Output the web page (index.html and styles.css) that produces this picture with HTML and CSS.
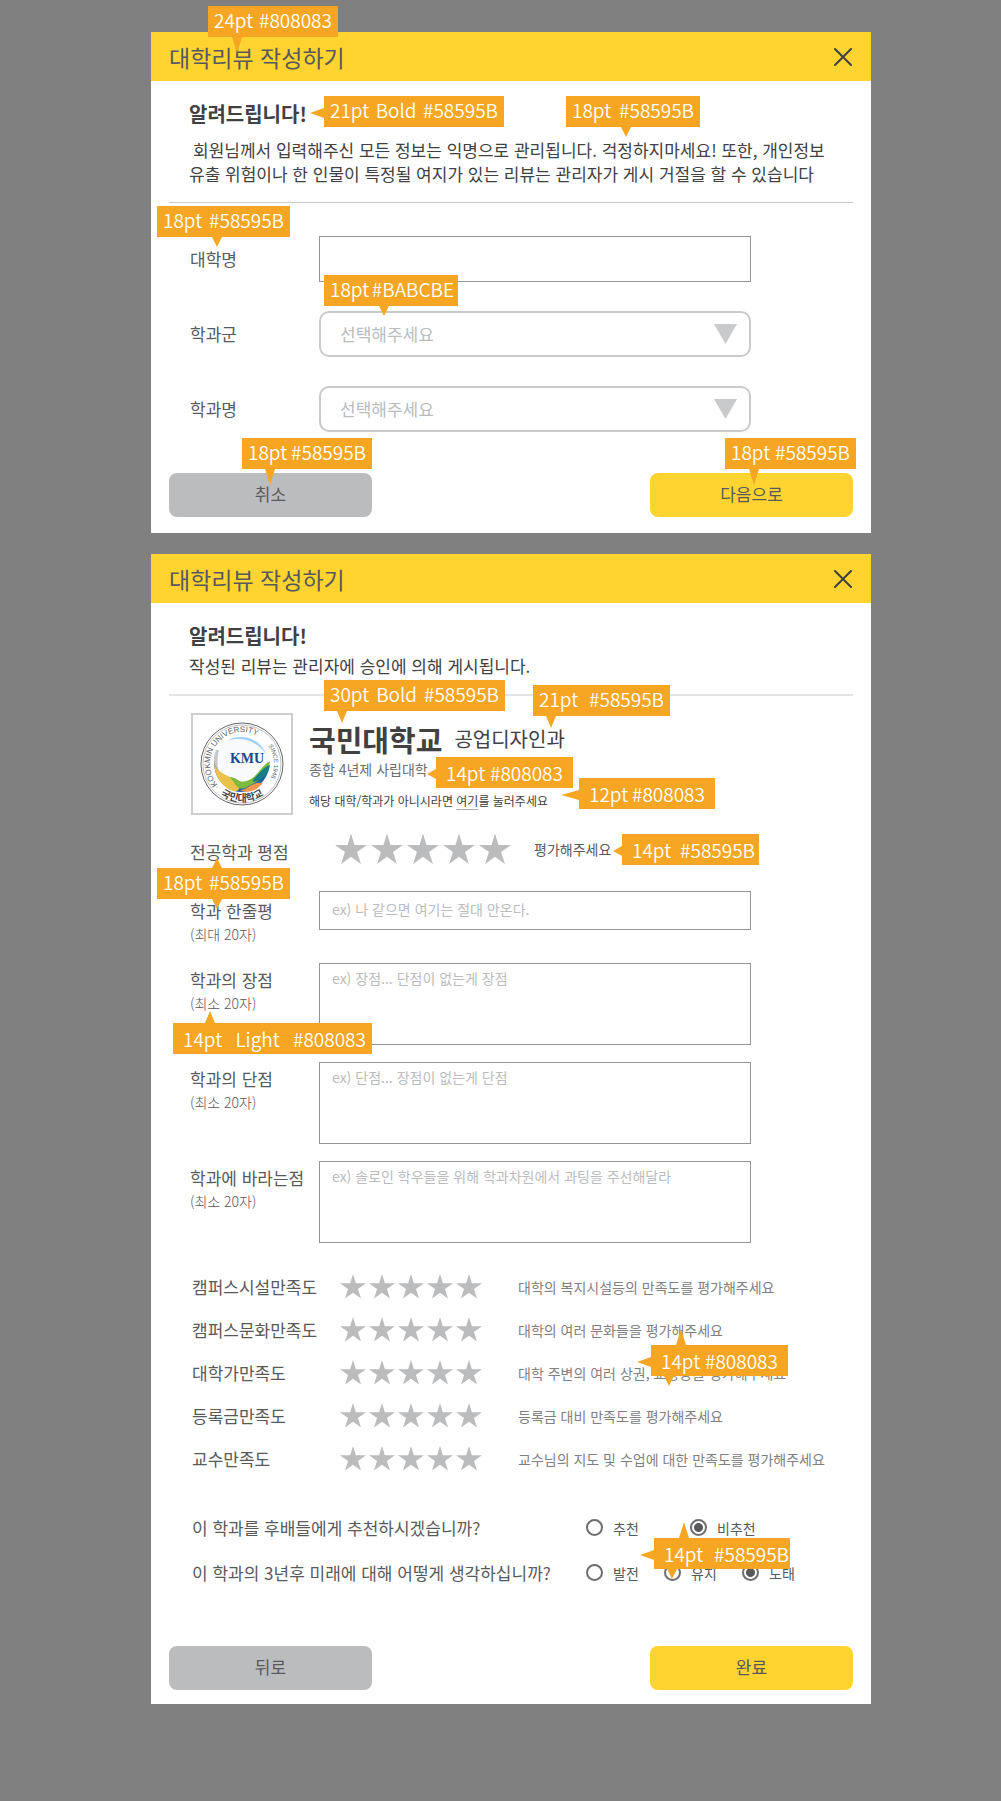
FILE: index.html
```html
<!DOCTYPE html>
<html lang="ko">
<head>
<meta charset="utf-8">
<meta name="viewport" content="width=device-width, initial-scale=1">
<title>대학리뷰 작성하기</title>
<link rel="stylesheet" href="styles.css">
</head>
<body>
<main class="board">

<section class="panel">
  <header class="panel-head">
    <h2>대학리뷰 작성하기</h2>
    <button type="button" class="close" aria-label="닫기"><svg viewBox="0 0 18 18"><path d="M1 1L17 17M17 1L1 17"/></svg></button>
  </header>
  <div class="notice">
    <h3>알려드립니다!</h3>
    <p class="indented">회원님께서 입력해주신 모든 정보는 익명으로 관리됩니다. 걱정하지마세요! 또한, 개인정보<br>유출 위험이나 한 인물이 특정될 여지가 있는 리뷰는 관리자가 게시 거절을 할 수 있습니다</p>
  </div>
  <form class="school-form">
    <div class="fields">
      <label for="univ">대학명</label>
      <input id="univ" class="box" type="text">
      <label for="group">학과군</label>
      <div class="select"><select id="group"><option>선택해주세요</option></select></div>
      <label for="dept">학과명</label>
      <div class="select"><select id="dept"><option>선택해주세요</option></select></div>
    </div>
    <div class="actions">
      <button type="button" class="btn">취소</button>
      <button type="button" class="btn primary">다음으로</button>
    </div>
  </form>

  <div class="note title-note"><span>24pt</span><span>#808083</span><i class="tail down"></i></div>
  <div class="note heading-note"><span>21pt</span><span>Bold</span><span>#58595B</span><i class="tail left"></i></div>
  <div class="note text-note"><span>18pt</span><span>#58595B</span><i class="tail down"></i></div>
  <div class="note label-note"><span>18pt</span><span>#58595B</span><i class="tail down"></i></div>
  <div class="note hint-note"><span>18pt</span><span>#BABCBE</span><i class="tail down"></i></div>
  <div class="note cancel-note"><span>18pt</span><span>#58595B</span><i class="tail down"></i></div>
  <div class="note next-note"><span>18pt</span><span>#58595B</span><i class="tail down"></i></div>
</section>

<section class="panel">
  <header class="panel-head">
    <h2>대학리뷰 작성하기</h2>
    <button type="button" class="close" aria-label="닫기"><svg viewBox="0 0 18 18"><path d="M1 1L17 17M17 1L1 17"/></svg></button>
  </header>
  <div class="notice compact">
    <h3>알려드립니다!</h3>
    <p>작성된 리뷰는 관리자에 승인에 의해 게시됩니다.</p>
  </div>
  <form class="review-form">
    <div class="school">
      <div class="emblem">
        <svg viewBox="0 0 98 98" role="img" aria-label="국민대학교">
          <defs>
            <path id="ring-top" d="M26.4 71.6A32 32 0 1 1 71.6 71.6"/>
            <path id="ring-bottom" d="M22 75.5A38 38 0 0 0 76 75.5"/>
          </defs>
          <circle cx="49" cy="49" r="41" fill="#fff" stroke="#666" stroke-width="1"/>
          <circle cx="49" cy="49" r="39" fill="none" stroke="#999" stroke-width=".6"/>
          <circle cx="49" cy="49" r="28" fill="#f8fafc"/>
          <path d="M34 26C44 19 65 20 73 39C64 26 48 21 34 26Z" fill="#9fd0f5"/>
          <path d="M23 35C19 45 21 52 26 58C24 50 24 42 26 35Z" fill="#c6c7c9"/>
          <path d="M21 47C25 62 40 61 49 70C58 69 68 64 76 54C72 70 57 80 41 76C29 72 21 61 21 47Z" fill="#1f5fa8"/>
          <path d="M21 47C24 61 39 59 46 70C48 74 44 77 40 76C29 72 21 61 21 47Z" fill="#ecc24b"/>
          <path d="M36 62C46 62 45 70 56 65C65 61 68 51 77 46C76 60 64 68 52 73C42 76 42 65 36 62Z" fill="#7cb93c"/>
          <path d="M60 65C66 58 71 52 77 50C76 58 70 65 60 67Z" fill="#167f84"/>
          <path d="M47 75C55 75 59 66 70 68C63 76 55 79 47 75Z" fill="#f29550"/>
          <text class="emblem-ring"><textPath href="#ring-top">·KOOKMIN UNIVERSITY</textPath></text>
          <text class="emblem-since"><textPath href="#ring-top" startOffset="106">SINCE 1946 ·</textPath></text>
          <text class="emblem-korean" text-anchor="middle"><textPath href="#ring-bottom" startOffset="50%">국민대학교</textPath></text>
          <text class="emblem-kmu" x="54" y="48" text-anchor="middle">KMU</text>
        </svg>
      </div>
      <div class="school-info">
        <div class="school-name"><strong>국민대학교</strong><span>공업디자인과</span></div>
        <p class="school-kind">종합 4년제 사립대학</p>
        <p class="school-change">해당 대학/학과가 아니시라면 <a href="#">여기</a>를 눌러주세요</p>
      </div>
    </div>

    <div class="major-rating">
      <span class="label" id="r0">전공학과 평점</span>
      <div class="stars large" role="radiogroup" aria-labelledby="r0"><input type="radio" name="r0" aria-label="1점"><input type="radio" name="r0" aria-label="2점"><input type="radio" name="r0" aria-label="3점"><input type="radio" name="r0" aria-label="4점"><input type="radio" name="r0" aria-label="5점"></div>
      <span class="prompt">평가해주세요</span>
    </div>

    <div class="essays">
      <label class="first" for="line">학과 한줄평<small>(최대 20자)</small></label>
      <input id="line" class="box" type="text" placeholder="ex) 나 같으면 여기는 절대 안온다.">
      <label for="pros">학과의 장점<small>(최소 20자)</small></label>
      <textarea id="pros" class="box" placeholder="ex) 장점... 단점이 없는게 장점"></textarea>
      <label for="cons">학과의 단점<small>(최소 20자)</small></label>
      <textarea id="cons" class="box" placeholder="ex) 단점... 장점이 없는게 단점"></textarea>
      <label for="wish">학과에 바라는점<small>(최소 20자)</small></label>
      <textarea id="wish" class="box" placeholder="ex) 솔로인 학우들을 위해 학과차원에서 과팅을 주선해달라"></textarea>
    </div>

    <div class="ratings">
      <div class="rating"><span class="label" id="r1">캠퍼스시설만족도</span><div class="stars" role="radiogroup" aria-labelledby="r1"><input type="radio" name="r1" aria-label="1점"><input type="radio" name="r1" aria-label="2점"><input type="radio" name="r1" aria-label="3점"><input type="radio" name="r1" aria-label="4점"><input type="radio" name="r1" aria-label="5점"></div><span class="guide">대학의 복지시설등의 만족도를 평가해주세요</span></div>
      <div class="rating"><span class="label" id="r2">캠퍼스문화만족도</span><div class="stars" role="radiogroup" aria-labelledby="r2"><input type="radio" name="r2" aria-label="1점"><input type="radio" name="r2" aria-label="2점"><input type="radio" name="r2" aria-label="3점"><input type="radio" name="r2" aria-label="4점"><input type="radio" name="r2" aria-label="5점"></div><span class="guide">대학의 여러 문화들을 평가해주세요</span></div>
      <div class="rating"><span class="label" id="r3">대학가만족도</span><div class="stars" role="radiogroup" aria-labelledby="r3"><input type="radio" name="r3" aria-label="1점"><input type="radio" name="r3" aria-label="2점"><input type="radio" name="r3" aria-label="3점"><input type="radio" name="r3" aria-label="4점"><input type="radio" name="r3" aria-label="5점"></div><span class="guide">대학 주변의 여러 상권, 교통등을 평가해주세요</span></div>
      <div class="rating"><span class="label" id="r4">등록금만족도</span><div class="stars" role="radiogroup" aria-labelledby="r4"><input type="radio" name="r4" aria-label="1점"><input type="radio" name="r4" aria-label="2점"><input type="radio" name="r4" aria-label="3점"><input type="radio" name="r4" aria-label="4점"><input type="radio" name="r4" aria-label="5점"></div><span class="guide">등록금 대비 만족도를 평가해주세요</span></div>
      <div class="rating"><span class="label" id="r5">교수만족도</span><div class="stars" role="radiogroup" aria-labelledby="r5"><input type="radio" name="r5" aria-label="1점"><input type="radio" name="r5" aria-label="2점"><input type="radio" name="r5" aria-label="3점"><input type="radio" name="r5" aria-label="4점"><input type="radio" name="r5" aria-label="5점"></div><span class="guide">교수님의 지도 및 수업에 대한 만족도를 평가해주세요</span></div>
    </div>

    <div class="questions">
      <div class="question" role="radiogroup" aria-labelledby="q1">
        <span class="label" id="q1">이 학과를 후배들에게 추천하시겠습니까?</span>
        <div class="options two">
          <label><input type="radio" name="q1">추천</label>
          <label><input type="radio" name="q1" checked>비추천</label>
        </div>
      </div>
      <div class="question" role="radiogroup" aria-labelledby="q2">
        <span class="label" id="q2">이 학과의 3년후 미래에 대해 어떻게 생각하십니까?</span>
        <div class="options three">
          <label><input type="radio" name="q2">발전</label>
          <label><input type="radio" name="q2">유지</label>
          <label><input type="radio" name="q2" checked>도태</label>
        </div>
      </div>
    </div>

    <div class="actions">
      <button type="button" class="btn">뒤로</button>
      <button type="button" class="btn primary">완료</button>
    </div>
  </form>

  <div class="note name-note"><span>30pt</span><span>Bold</span><span>#58595B</span><i class="tail down"></i></div>
  <div class="note major-note"><span>21pt</span><span>#58595B</span><i class="tail down"></i></div>
  <div class="note kind-note"><span>14pt</span><span>#808083</span><i class="tail left"></i></div>
  <div class="note change-note"><span>12pt</span><span>#808083</span><i class="tail left"></i></div>
  <div class="note prompt-note"><span>14pt</span><span>#58595B</span><i class="tail left"></i></div>
  <div class="note field-note"><span>18pt</span><span>#58595B</span><i class="tail up"></i><i class="tail down"></i></div>
  <div class="note limit-note"><span>14pt</span><span>Light</span><span>#808083</span><i class="tail up"></i></div>
  <div class="note guide-note"><span>14pt</span><span>#808083</span><i class="tail up"></i><i class="tail left"></i><i class="tail down"></i></div>
  <div class="note option-note"><span>14pt</span><span>#58595B</span><i class="tail up"></i><i class="tail left"></i><i class="tail down"></i></div>
</section>

</main>
</body>
</html>
```

FILE: styles.css
```css
* { box-sizing: border-box; }

body {
  margin: 0;
  background: #808080;
  color: #58595b;
  font: 17px/24px "Noto Sans CJK KR", sans-serif;
}

h2, h3, p { margin: 0; font-weight: 400; }

button, input, select, textarea { font: inherit; color: inherit; }

.board {
  display: flex;
  flex-direction: column;
  gap: 21px;
  padding: 32px 130px 96px 151px;
}

.panel { position: relative; background: #fff; }

/* Panel header */
.panel-head {
  display: flex;
  align-items: center;
  justify-content: space-between;
  height: 49px;
  padding: 0 18px;
  background: #ffd430;
}
.panel-head h2 { font-size: 23px; line-height: 32px; }
.close {
  display: flex;
  width: 20px;
  height: 20px;
  padding: 1px;
  border: 0;
  background: none;
}
.close svg { width: 18px; height: 18px; stroke: #414042; stroke-width: 2; stroke-linecap: round; }

/* Notice */
.notice {
  margin: 0 18px;
  padding: 19px 0 16px 20px;
  border-bottom: 1px solid #c8c9ca;
  color: #414042;
  white-space: nowrap;
}
.notice h3 { margin-bottom: 10px; font-size: 20px; font-weight: 700; line-height: 28px; }
.notice.compact { border-bottom: 2px solid #e4e4e5; }
.notice.compact h3 { margin-bottom: 4px; }
.indented { text-indent: 4px; }

/* School form */
.fields {
  display: grid;
  grid-template-columns: 129px minmax(0, 432px);
  row-gap: 29px;
  align-items: center;
  padding: 33px 39px 0;
}
.box {
  width: 100%;
  height: 46px;
  padding: 0 12px;
  border: 1px solid #939598;
  background: #fff;
  resize: none;
  outline: 0;
}
.select { position: relative; }
.select select {
  display: block;
  width: 100%;
  height: 46px;
  padding: 0 19px;
  border: 2px solid #c9cacb;
  border-radius: 10px;
  background: #fff;
  color: #babcbe;
  appearance: none;
}
.select::after {
  content: "";
  position: absolute;
  top: 13px;
  right: 14px;
  width: 23px;
  height: 20px;
  background: #c9cacb;
  clip-path: polygon(0 0, 100% 0, 50% 100%);
  pointer-events: none;
}

.actions { display: flex; justify-content: space-between; padding: 41px 18px 16px; }
.btn {
  width: 203px;
  height: 44px;
  padding: 0 0 2px;
  border: 0;
  border-radius: 8px;
  background: #babcbe;
}
.btn.primary { background: #ffd430; }

/* School summary */
.school { display: flex; gap: 16px; padding: 17px 40px 0; white-space: nowrap; }
.emblem { flex: none; width: 102px; height: 102px; border: 2px solid #cdcecf; }
.emblem svg { display: block; width: 98px; height: 98px; }
.emblem text { font-family: "Liberation Sans", "Noto Sans CJK KR", sans-serif; fill: #5b6168; }
.emblem .emblem-ring { font-size: 8px; }
.emblem .emblem-since { font-size: 6px; }
.emblem .emblem-korean { font-size: 10px; font-weight: 700; font-family: "Noto Sans CJK KR", sans-serif; fill: #444; }
.emblem .emblem-kmu { font: 700 14px "Liberation Serif", serif; fill: #124a8c; }
.school-info { padding-top: 8px; }
.school-name { display: flex; align-items: center; gap: 12px; height: 36px; color: #414042; font-size: 20px; }
.school-name strong { font-size: 29px; }
.school-kind { margin-top: 2px; font-size: 14px; line-height: 20px; color: #6d6e71; }
.school-change { margin-top: 12px; font-size: 12px; line-height: 20px; color: #414042; }
.school-change a { color: inherit; text-decoration: underline #a7a9ac; text-underline-offset: 3px; }

/* Star ratings */
.stars { display: flex; gap: 3px; }
.stars input {
  width: 26px;
  height: 25px;
  margin: 0;
  background: #babcbe;
  appearance: none;
  clip-path: polygon(50% 0, 61% 37%, 100% 37%, 69% 60%, 81% 98%, 50% 75%, 19% 98%, 31% 60%, 0 37%, 39% 37%);
}
.stars.large { gap: 4px; }
.stars.large input { width: 32px; height: 31px; }
.major-rating {
  display: grid;
  grid-template-columns: 145px auto 1fr;
  align-items: center;
  height: 34px;
  margin-top: 17px;
  padding: 0 39px;
}
.major-rating .label { padding-top: 6px; }
.prompt { padding-left: 23px; font-size: 14px; }

/* Written answers */
.essays {
  display: grid;
  grid-template-columns: 129px minmax(0, 432px);
  row-gap: 17px;
  align-items: start;
  padding: 25px 39px 0;
}
.essays label { padding-top: 5px; white-space: nowrap; }
.essays label.first { padding-top: 8px; }
.essays small { display: block; font-size: 14px; font-weight: 300; line-height: 23px; }
.essays .box { font-size: 14px; }
.essays input.box { height: 39px; padding-bottom: 4px; }
.essays textarea.box { display: block; height: 82px; padding-top: 4px; line-height: 20px; }
.box::placeholder { color: #babcbe; opacity: 1; }

.ratings { padding: 22px 20px 0 41px; }
.rating { display: grid; grid-template-columns: 148px 142px 1fr; align-items: center; height: 43px; white-space: nowrap; }
.guide { padding-left: 36px; font-size: 14px; color: #808083; }

/* Closing questions */
.questions { padding: 25px 20px 0 41px; }
.question { display: grid; grid-template-columns: 394px 1fr; align-items: center; height: 45px; white-space: nowrap; }
.options { display: grid; font-size: 14px; line-height: 20px; }
.options.two { grid-template-columns: 104px 104px; }
.options.three { grid-template-columns: 78px 78px 78px; }
.options label { display: flex; align-items: center; gap: 10px; }
.options input {
  width: 17px;
  height: 17px;
  margin: 0;
  border: 2px solid #6d6e71;
  border-radius: 50%;
  appearance: none;
}
.options input:checked { background: radial-gradient(circle, #58595b 4px, #fff 5px); }
.review-form .actions { padding-top: 51px; padding-bottom: 14px; }

/* Design annotations laid over the panels */
.note {
  position: absolute;
  display: flex;
  align-items: center;
  justify-content: space-between;
  height: 31px;
  padding: 0 6px 3px;
  background: #f6a623;
  color: #fff;
  font-size: 19px;
  font-weight: 350;
  white-space: nowrap;
}
.tail { position: absolute; background: #f6a623; }
.tail.down { top: 100%; left: var(--down); width: 10px; height: var(--down-size, 10px); clip-path: polygon(0 0, 100% 0, 50% 100%); }
.tail.up { bottom: 100%; left: var(--up); width: 10px; height: var(--up-size, 10px); clip-path: polygon(0 100%, 50% 0, 100% 100%); }
.tail.left { right: 100%; top: 12px; width: var(--left-size, 14px); height: 10px; clip-path: polygon(0 50%, 100% 0, 100% 100%); }

.title-note { left: 57px; top: -26px; width: 130px; --down: 24px; --down-size: 16px; }
.heading-note { left: 173px; top: 64px; width: 180px; }
.text-note { left: 415px; top: 64px; width: 134px; --down: 55px; }
.label-note { left: 6px; top: 174px; width: 133px; --down: 55px; }
.hint-note { left: 173px; top: 243px; width: 134px; padding-right: 4px; --down: 55px; }
.cancel-note { left: 91px; top: 406px; width: 130px; --down: 23px; --down-size: 16px; }
.next-note { left: 574px; top: 406px; width: 131px; --down: 24px; --down-size: 16px; }

.name-note { left: 173px; top: 126px; width: 181px; --down: 13px; --down-size: 12px; }
.major-note { left: 382px; top: 131px; width: 137px; --down: 13px; --down-size: 12px; }
.kind-note { left: 285px; top: 203px; width: 137px; padding: 0 10px; --left-size: 9px; }
.change-note { left: 428px; top: 224px; width: 136px; padding: 0 10px; --left-size: 18px; }
.prompt-note { left: 471px; top: 280px; width: 137px; padding: 0 4px 0 10px; --left-size: 9px; }
.field-note { left: 6px; top: 314px; width: 133px; --down: 55px; --up: 55px; }
.limit-note { left: 22px; top: 469px; width: 199px; padding: 0 6px 0 10px; --up: 32px; --up-size: 12px; }
.guide-note { left: 500px; top: 791px; width: 137px; padding: 0 10px; --up: 25px; --up-size: 16px; --down: 13px; }
.option-note { left: 503px; top: 984px; width: 136px; padding: 0 1px 0 10px; --up: 25px; --up-size: 16px; --down: 13px; }
```
